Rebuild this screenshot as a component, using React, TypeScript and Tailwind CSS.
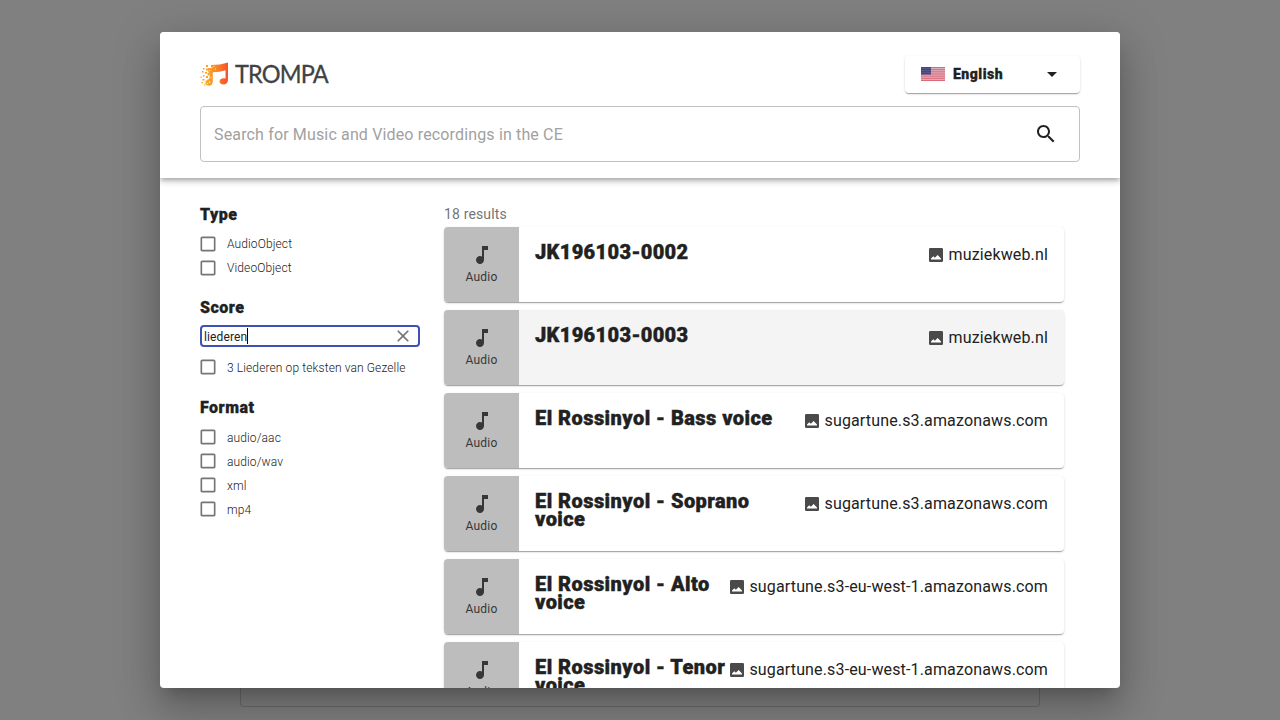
import React from 'react';

type Result = { title: string; source: string; hovered?: boolean };

const results: Result[] = [
  { title: 'JK196103-0002', source: 'muziekweb.nl' },
  { title: 'JK196103-0003', source: 'muziekweb.nl', hovered: true },
  { title: 'El Rossinyol - Bass voice', source: 'sugartune.s3.amazonaws.com' },
  { title: 'El Rossinyol - Soprano voice', source: 'sugartune.s3.amazonaws.com' },
  { title: 'El Rossinyol - Alto voice', source: 'sugartune.s3-eu-west-1.amazonaws.com' },
  { title: 'El Rossinyol - Tenor voice', source: 'sugartune.s3-eu-west-1.amazonaws.com' },
];

function Icon({ d, className }: { d: string; className: string }) {
  return (
    <svg viewBox="0 0 24 24" className={className} fill="currentColor" aria-hidden="true">
      <path d={d} />
    </svg>
  );
}

const paths = {
  search:
    'M15.5 14h-.79l-.28-.27C15.41 12.59 16 11.11 16 9.5 16 5.91 13.09 3 9.5 3S3 5.91 3 9.5 5.91 16 9.5 16c1.61 0 3.09-.59 4.23-1.57l.27.28v.79l5 4.99L20.49 19l-4.99-5zm-6 0C7.01 14 5 11.99 5 9.5S7.01 5 9.5 5 14 7.01 14 9.5 11.99 14 9.5 14z',
  arrow: 'M7 10l5 5 5-5z',
  box: 'M19 5v14H5V5h14m0-2H5c-1.1 0-2 .9-2 2v14c0 1.1.9 2 2 2h14c1.1 0 2-.9 2-2V5c0-1.1-.9-2-2-2z',
  close:
    'M19 6.41L17.59 5 12 10.59 6.41 5 5 6.41 10.59 12 5 17.59 6.41 19 12 13.41 17.59 19 19 17.59 13.41 12z',
  note: 'M12 3v10.55c-.59-.34-1.27-.55-2-.55-2.21 0-4 1.79-4 4s1.79 4 4 4 4-1.79 4-4V7h4V3h-6z',
};

function Logo() {
  return (
    <div className="flex h-8 items-center">
      <svg width="30" height="26" viewBox="0 0 30 26" aria-hidden="true">
        <defs>
          <linearGradient id="flame" x1="0" x2="1" y1="0" y2="0">
            <stop offset="0" stopColor="#fbb02c" />
            <stop offset="0.45" stopColor="#f98a25" />
            <stop offset="1" stopColor="#f4512c" />
          </linearGradient>
        </defs>
        <path
          fill="url(#flame)"
          d="M11 3C17 3 23 2.200 28 0.500V17.800C28 21 26 22.500 23.300 22.500C21 22.500 19.500 21.300 19.500 19.600C19.500 17.400 21.300 16.200 23.600 16.200C24.400 16.200 25 16.300 25.500 16.500V8.200C21.500 9.500 17.500 10.100 12.800 10.200V19.500C12.800 22.300 11.300 23.800 8.900 23.800C6.700 23.800 5.300 22.700 5.300 21C5.300 19 6.800 17.500 8.500 17.200L9.500 16V12L8 9V6H11Z"
        />
        <g fill="#f9a22a">
          <path d="M6 3h2v2H6zM3 6h1.500v1.500H3zM6 6.500h2v2H6zM2 9h1.500v1.500H2zM5 10h2v1.500H5zM7.500 11h2v2.500h-2zM3 13h1.500v1.500H3zM6 14h2v2H6zM0.500 14.500h1.300v1.300H.500zM2.500 17h2v1.500h-2zM1.500 20h1.500v1.300H1.500zM4 22.500h1.500v1H4z" />
        </g>
        <g fill="#ffe3b0">
          <path d="M11 5h1.200v1.200H11zM13.500 4h1v1h-1zM15 6.500h1v1h-1zM9 8h1.200v1H9zM9 19.500h1.300V21H9zM7 21h1v1H7zM10.500 15h1v1h-1z" />
        </g>
      </svg>
      <span className="mb-[3px] ml-[4.5px] inline-block origin-left scale-x-[0.94] font-[Lato] text-[25px] leading-8 tracking-[-0.9px] text-[#404244] [-webkit-text-stroke:0.3px_#404244]">
        TROMPA
      </span>
    </div>
  );
}

function Flag() {
  return (
    <svg width="24" height="14" viewBox="0 0 24 14" className="-mt-0.5 block" aria-hidden="true">
      <rect width="24" height="14" fill="#dfb6be" />
      {[0, 1, 2, 3, 4, 5, 6].map((i) => (
        <rect key={i} y={(i * 28) / 13} width="24" height={14 / 13} fill="#d86a7c" />
      ))}
      <rect width="10" height="7.540" fill="#48467f" />
      {[1, 3, 5].map((y) =>
        [1, 3, 5, 7, 9].map((x) => <rect key={`${x}-${y}`} x={x - 0.3} y={y} width="0.700" height="0.700" fill="#8583ad" />),
      )}
    </svg>
  );
}

function Option({ label, low }: { label: string; low?: boolean }) {
  return (
    <label className="flex h-6 items-center">
      <Icon d={paths.box} className="-ml-0.5 size-5 shrink-0 text-[#757575]" />
      <span
        className={`ml-[9px] text-[12px] font-light leading-[21px] tracking-[0.11px] text-[#212121] ${low ? 'pt-[3px]' : 'pt-px'}`}
      >
        {label}
      </span>
    </label>
  );
}

function Heading({ children }: { children: React.ReactNode }) {
  return (
    <h3 className="text-[16px] font-black leading-[18px] tracking-[0.5px] text-[#212121] [-webkit-text-stroke:0.3px_#212121]">
      {children}
    </h3>
  );
}

function Card({ title, source, hovered }: Result) {
  return (
    <article
      className={`flex h-[75px] shrink-0 overflow-hidden rounded-[4px] shadow-[0px_2px_1px_-1px_rgba(0,0,0,0.2),0px_1px_1px_0px_rgba(0,0,0,0.14),0px_1px_3px_0px_rgba(0,0,0,0.12)] ${hovered ? 'bg-[#f4f4f4]' : 'bg-white'}`}
    >
      <div className="flex w-[75px] shrink-0 flex-col items-center bg-[#bdbdbd] pt-4 text-[#373737]">
        <Icon d={paths.note} className="size-6" />
        <span className="text-[12px] leading-5 tracking-[0.2px]">Audio</span>
      </div>
      <div className="flex min-w-0 flex-1 justify-between px-4 pt-4">
        <h2
          className={`min-w-0 pr-1 text-[20px] font-black leading-[18px] text-[#212121] [-webkit-text-stroke:0.4px_#212121] ${title.startsWith('JK') ? 'tracking-[0.35px]' : 'tracking-[0.45px]'}`}
        >
          {title}
        </h2>
        <div className="flex h-6 shrink-0 items-center text-[#212121]">
          <svg viewBox="0 0 14 14" className="mr-[5.5px] size-3.5" aria-hidden="true">
            <rect width="14" height="14" rx="1.3" fill="#4a4a4a" />
            <path fill="white" d="M2 11.500V10.500L4.300 8.200L5.900 9.800L8.600 6.900L12 10.500V11.500Z" />
          </svg>
          <span className="text-[16px] leading-6 tracking-[0.15px]">{source}</span>
        </div>
      </div>
    </article>
  );
}

export default function App() {
  return (
    <div className="relative h-[720px] w-[1280px] overflow-hidden bg-[#808080] font-[Roboto,sans-serif]">
      <div className="mx-auto flex h-[707px] w-[800px] items-end">
        <div className="h-20 w-full rounded-b-[4px] border border-t-0 border-[#6b6b6b]" />
      </div>
      <div className="absolute inset-0 flex items-center justify-center">
        <main className="flex h-[656px] w-[960px] flex-col overflow-hidden rounded-[4px] bg-white shadow-[0px_11px_15px_-7px_rgba(0,0,0,0.2),0px_24px_38px_3px_rgba(0,0,0,0.14),0px_9px_46px_8px_rgba(0,0,0,0.12)]">
          <header className="relative z-10 h-[146px] shrink-0 bg-white px-10 pt-6 shadow-[0px_2px_4px_-1px_rgba(0,0,0,0.2),0px_4px_5px_0px_rgba(0,0,0,0.14),0px_1px_10px_0px_rgba(0,0,0,0.12)]">
            <div className="flex h-[37px] items-center justify-between">
              <Logo />
              <button className="flex h-[37px] w-[175px] items-center rounded-[4px] bg-white pl-4 pr-4 text-left shadow-[0px_2px_1px_-1px_rgba(0,0,0,0.2),0px_1px_1px_0px_rgba(0,0,0,0.14),0px_1px_3px_0px_rgba(0,0,0,0.12)]">
                <Flag />
                <span className="ml-2 flex-1 text-[14px] font-black tracking-[0.5px] text-[#212121] [-webkit-text-stroke:0.3px_#212121]">
                  English
                </span>
                <Icon d={paths.arrow} className="mb-px size-6 text-[#212121]" />
              </button>
            </div>
            <div className="mt-[13px] flex h-14 items-center justify-between rounded-[4px] border border-[#c1c1c1] pl-[13px] pr-[21px]">
              <span className="pt-0.5 text-[16px] tracking-[0.15px] text-[#a1a1a1]">Search for Music and Video recordings in the CE</span>
              <Icon d={paths.search} className="size-6 text-[#212121]" />
            </div>
          </header>
          <div className="flex min-h-0 flex-1 px-10">
            <aside className="w-[220px] shrink-0 pt-7">
              <section>
                <Heading>Type</Heading>
                <div className="mt-2">
                  <Option label="AudioObject" />
                  <Option label="VideoObject" />
                </div>
              </section>
              <section className="mt-[19px]">
                <Heading>Score</Heading>
                <div className="mt-2 flex h-[22px] items-center rounded-[4px] border-2 border-[#3f51b5] pl-0.5 pr-[5px]">
                  <span className="border-r border-black pt-0.5 text-[12px] leading-[14px] tracking-[0.11px] text-[#212121]">
                    liederen
                  </span>
                  <Icon d={paths.close} className="ml-auto size-5 text-[#757575]" />
                </div>
                <div className="mt-2">
                  <Option label="3 Liederen op teksten van Gezelle" low />
                </div>
              </section>
              <section className="mt-5">
                <Heading>Format</Heading>
                <div className="mt-2">
                  {['audio/aac', 'audio/wav', 'xml', 'mp4'].map((f) => (
                    <Option key={f} label={f} low />
                  ))}
                </div>
              </section>
            </aside>
            <section className="ml-6 w-[620px] pt-6">
              <p className="pb-px text-[14px] leading-6 tracking-[0.15px] text-[#757575]">18 results</p>
              <div className="flex flex-col gap-2">
                {results.map((r) => (
                  <Card key={r.title} {...r} />
                ))}
              </div>
            </section>
          </div>
        </main>
      </div>
    </div>
  );
}
